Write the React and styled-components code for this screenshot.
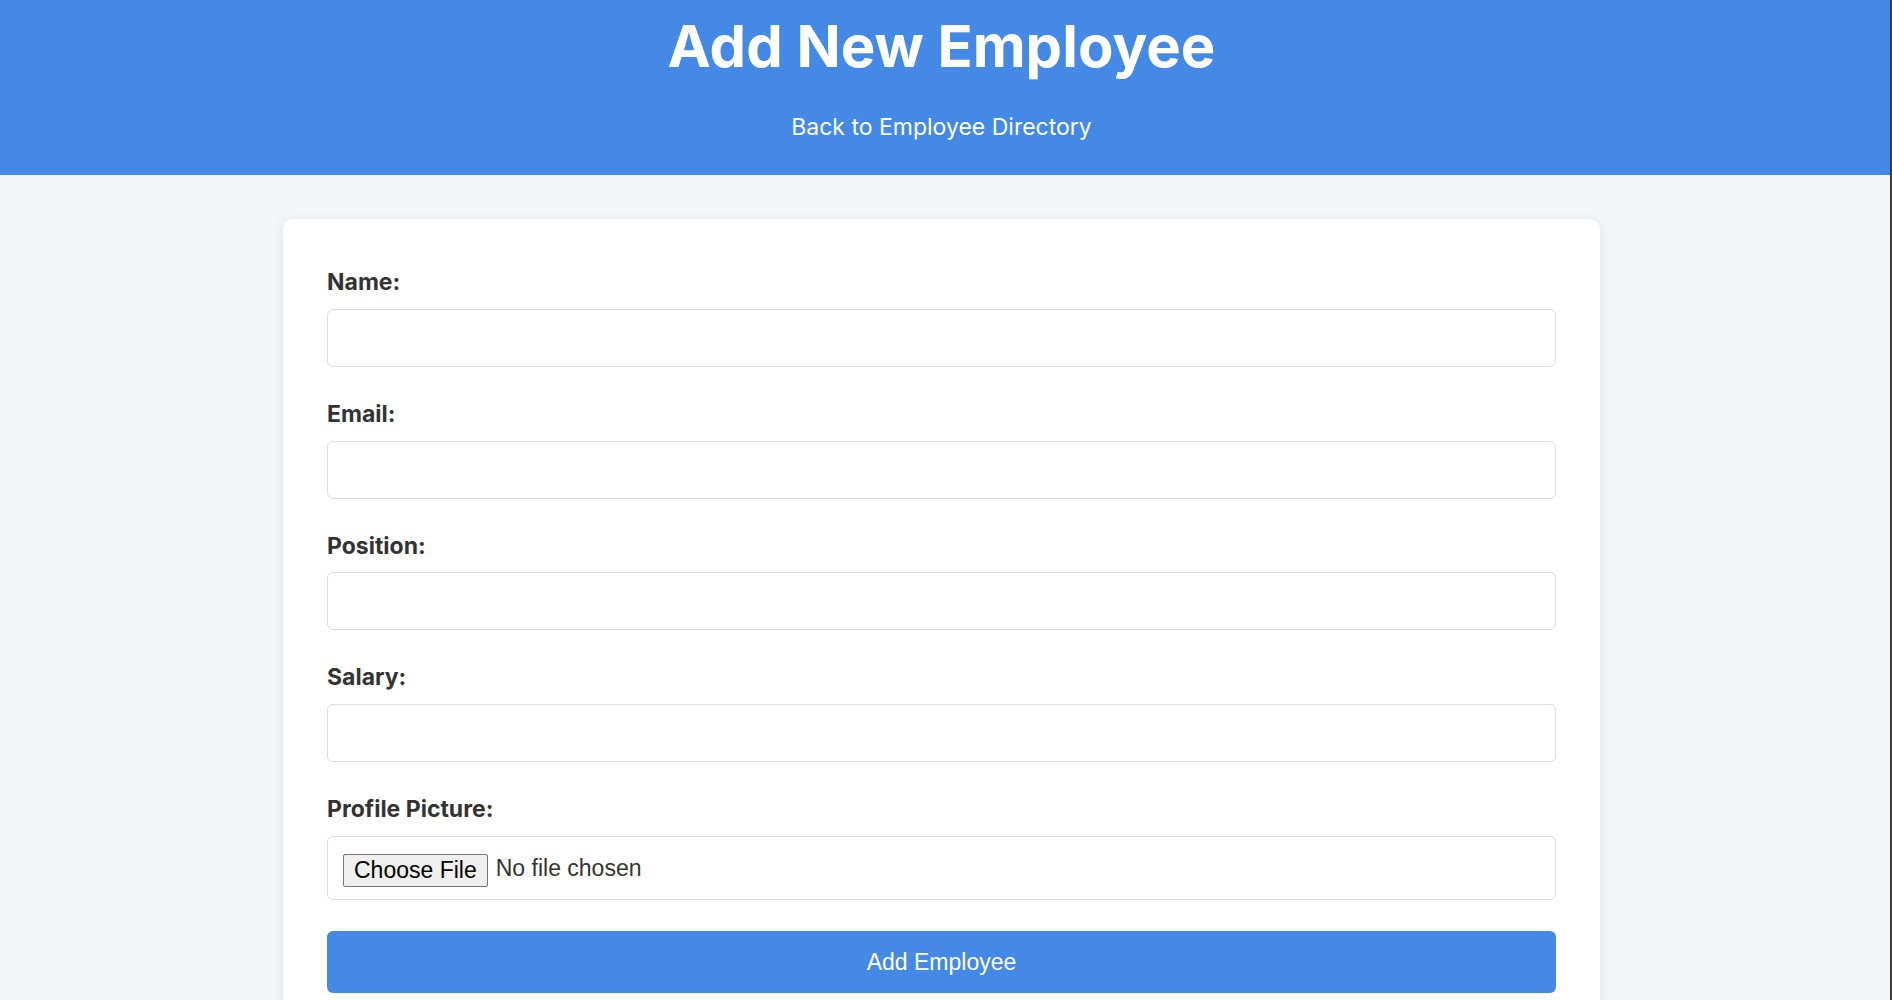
import React from "react";
import styled, { createGlobalStyle } from "styled-components";

const Global = createGlobalStyle`
  html, body { margin: 0; padding: 0; }
  body {
    background: #f4f5f9;
    font-family: Inter, "Noto Sans", sans-serif;
    color: #333;
    min-height: 1000px;
    border-right: 2px solid #3a3a3a;
    box-sizing: border-box;
  }
  * { box-sizing: border-box; }
`;

const Page = styled.div`
  display: flex;
  flex-direction: column;
  min-height: 1000px;
`;

const Header = styled.header`
  background: #4489e6;
  color: #fff;
  padding: 11px 7px 33px 0;
  display: flex;
  flex-direction: column;
  align-items: center;
`;

const Title = styled.h1`
  margin: 0 0 33px;
  font-size: 58px;
  font-weight: 700;
  line-height: 1.21;
`;

const BackLink = styled.a`
  color: #fff;
  text-decoration: none;
  font-size: 23px;
  line-height: 1.21;
`;

const Main = styled.main`
  padding: 44px 7px 0 0;
  display: flex;
  justify-content: center;
`;

const Card = styled.form`
  width: 1317px;
  background: #fff;
  border-radius: 10px;
  box-shadow: 0 2px 12px rgba(0, 0, 0, 0.08);
  padding: 50px 44px 44px;
  display: flex;
  flex-direction: column;
`;

const Field = styled.div`
  display: flex;
  flex-direction: column;
  margin-bottom: ${(p) => (p.$last ? "31px" : "34px")};
`;

const Label = styled.label`
  font-size: 23px;
  font-weight: 700;
  line-height: 1.21;
  color: #333;
  margin-bottom: 12px;
`;

const TextInput = styled.input`
  height: 58px;
  width: 100%;
  border: 1px solid #dcdcdc;
  border-radius: 6px;
  padding: 0 15px;
  font-size: 23px;
  font-family: inherit;
  background: #fff;
  outline: none;
`;

const FileInput = styled.input`
  width: 100%;
  height: 64px;
  border: 1px solid #dcdcdc;
  border-radius: 6px;
  padding: 0 15px;
  font-size: 23px;
  font-family: "Liberation Sans", Arial, sans-serif;
  color: #333;
  background: #fff;
  display: flex;
  align-items: center;
  line-height: 62px;

  &::file-selector-button {
    height: 33px;
    padding: 0 10px;
    margin-right: 8px;
    font-size: 23px;
    font-family: "Liberation Sans", Arial, sans-serif;
    color: #000;
    background: #efefef;
    border: 1px solid #767676;
    border-radius: 2px;
    vertical-align: middle;
  }
`;

const Submit = styled.button`
  height: 62px;
  width: 100%;
  border: none;
  border-radius: 6px;
  background: #4489e6;
  color: #fff;
  font-size: 23px;
  font-family: "Liberation Sans", Arial, sans-serif;
  cursor: pointer;
`;

const fields = [
  { id: "name", label: "Name:", type: "text" },
  { id: "email", label: "Email:", type: "email" },
  { id: "position", label: "Position:", type: "text" },
  { id: "salary", label: "Salary:", type: "number" },
];

export default function App() {
  return (
    <>
      <Global />
      <Page>
        <Header>
          <Title>Add New Employee</Title>
          <BackLink href="#">Back to Employee Directory</BackLink>
        </Header>
        <Main>
          <Card onSubmit={(e) => e.preventDefault()}>
            {fields.map((f) => (
              <Field key={f.id}>
                <Label htmlFor={f.id}>{f.label}</Label>
                <TextInput id={f.id} type={f.type} />
              </Field>
            ))}
            <Field $last>
              <Label htmlFor="pic">Profile Picture:</Label>
              <FileInput id="pic" type="file" />
            </Field>
            <Submit type="submit">Add Employee</Submit>
          </Card>
        </Main>
      </Page>
    </>
  );
}
